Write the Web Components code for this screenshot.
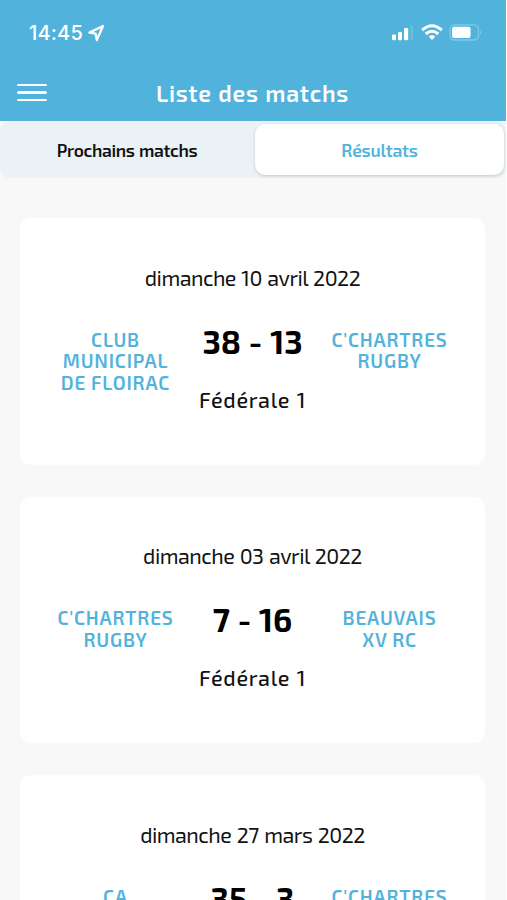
<!DOCTYPE html>
<html lang="fr">
<head>
<meta charset="utf-8">
<meta name="viewport" content="width=device-width, initial-scale=1">
<title>Liste des matchs</title>
<style>
    html {
        background: #fff;
    }
    body {
        margin: 0;
        width: 506px;
        height: 900px;
        overflow: hidden;
        background: #f8f8f8;
        font-family: "Exo 2", Roboto, sans-serif;
        color: #111;
        --blue: #51b3dc;
    }
</style>
</head>
<body>
<match-screen>
    <status-bar slot="top" time="14:45"></status-bar>
    <title-bar slot="top">Liste des matchs</title-bar>
    <tab-bar slot="top">
        <tab-item>Prochains matchs</tab-item>
        <tab-item active>Résultats</tab-item>
    </tab-bar>
    <match-card score="38 - 13" level="Fédérale 1">
        dimanche 10 avril 2022
        <team-name slot="home">CLUB<br>MUNICIPAL<br>DE FLOIRAC</team-name>
        <team-name slot="away">C'CHARTRES<br>RUGBY</team-name>
    </match-card>
    <match-card score="7 - 16" level="Fédérale 1">
        dimanche 03 avril 2022
        <team-name slot="home">C'CHARTRES<br>RUGBY</team-name>
        <team-name slot="away">BEAUVAIS<br>XV RC</team-name>
    </match-card>
    <match-card score="35 - 3" level="Fédérale 1">
        dimanche 27 mars 2022
        <team-name slot="home">CA</team-name>
        <team-name slot="away">C'CHARTRES</team-name>
    </match-card>
</match-screen>

<script>
class MatchScreen extends HTMLElement {
    constructor() {
        super();
        this.attachShadow({ mode: 'open' });
        this.shadowRoot.innerHTML = `
            <style>
                :host { display: block; height: 900px; overflow: hidden; }
                .list {
                    display: flex;
                    flex-direction: column;
                    gap: 32px;
                    padding: 40px 21px 0 20px;
                }
            </style>
            <slot name="top"></slot>
            <div class="list"><slot></slot></div>
        `;
    }
}

class StatusBar extends HTMLElement {
    connectedCallback() {
        this.attachShadow({ mode: 'open' });
        this.shadowRoot.innerHTML = `
            <style>
                :host {
                    display: flex;
                    align-items: center;
                    height: 65px;
                    padding: 0 24px 0 29px;
                    box-sizing: border-box;
                    background: var(--blue);
                    color: #fff;
                }
                .time {
                    font: 500 20px/24px Inter, sans-serif;
                    letter-spacing: 0.2px;
                }
                svg { display: block; }
                .arrow { margin-left: 5px; }
                .icons { display: flex; margin-left: auto; }
            </style>
            <span class="time">${this.getAttribute('time')}</span>
            <svg class="arrow" width="17" height="18" viewBox="0 0 17 18">
                <path d="M15 2 L1.4 8.6 L7.6 9.6 L8.8 16 Z" fill="none" stroke="#fff" stroke-width="2.3" stroke-linejoin="round"/>
            </svg>
            <div class="icons">
                <svg width="92" height="20" viewBox="0 0 92 20">
                    <!-- signal -->
                    <g fill="#fff">
                        <rect x="2" y="11.5" width="4" height="5.7" rx="1.2"/>
                        <rect x="8" y="9" width="4" height="8.2" rx="1.2"/>
                        <rect x="14" y="5" width="4.2" height="12.2" rx="1.2"/>
                        <rect x="20.5" y="2" width="2.6" height="15.2" rx="1.2" opacity=".15"/>
                    </g>
                    <!-- wifi -->
                    <g fill="none" stroke="#fff" stroke-width="3">
                        <path d="M32.2 7 Q42 -1.6 51.8 7"/>
                        <path d="M35.7 11 Q42 5.6 48.3 11"/>
                    </g>
                    <path d="M38.8 13.6 Q42 11 45.2 13.6 L42 17 Z" fill="#fff"/>
                    <!-- battery -->
                    <rect x="60" y="1.8" width="28.5" height="15.2" rx="4.5" fill="none" stroke="#7fcbe9" stroke-width="1.3"/>
                    <rect x="62" y="3.8" width="18.6" height="11.2" rx="2.2" fill="#fff"/>
                    <path d="M90 7 Q92 9.4 90 11.8 Z" fill="#7fcbe9"/>
                </svg>
            </div>
        `;
    }
}

class TitleBar extends HTMLElement {
    constructor() {
        super();
        this.attachShadow({ mode: 'open' });
        this.shadowRoot.innerHTML = `
            <style>
                :host {
                    display: grid;
                    grid-template-columns: 30px 1fr 30px;
                    align-items: center;
                    height: 56px;
                    padding: 0 18px 1px 17px;
                    box-sizing: border-box;
                    background: var(--blue);
                    color: #fff;
                }
                .menu { display: flex; flex-direction: column; gap: 5px; }
                .menu i { height: 2.6px; border-radius: 2px; background: #fff; }
                h1 {
                    margin: 0;
                    text-align: center;
                    font-size: 23px;
                    font-weight: 650;
                    letter-spacing: 0.7px;
                    word-spacing: 1px;
                }
            </style>
            <div class="menu"><i></i><i></i><i></i></div>
            <h1><slot></slot></h1>
        `;
    }
}

class TabBar extends HTMLElement {
    constructor() {
        super();
        this.attachShadow({ mode: 'open' });
        this.shadowRoot.innerHTML = `
            <style>
                :host {
                    display: grid;
                    grid-template-columns: 1fr 1fr;
                    height: 57px;
                    padding: 3px 2px;
                    box-sizing: border-box;
                    border-radius: 9px;
                    background: #eaf2f5;
                }
            </style>
            <slot></slot>
        `;
    }
}

class TabItem extends HTMLElement {
    constructor() {
        super();
        this.attachShadow({ mode: 'open' });
        this.shadowRoot.innerHTML = `
            <style>
                :host {
                    display: flex;
                    align-items: center;
                    justify-content: center;
                    margin-left: 2px;
                    padding: 2px 3px 0 0;
                    border-radius: 10px;
                    font-size: 17.5px;
                    font-weight: 600;
                    letter-spacing: -0.35px;
                    word-spacing: 1px;
                    box-sizing: border-box;
                }
                :host([active]) {
                    padding-right: 0;
                    background: #fff;
                    color: var(--blue);
                    letter-spacing: -0.2px;
                    box-shadow: 0 1px 3px rgba(0, 40, 60, 0.18);
                }
            </style>
            <slot></slot>
        `;
    }
}

class MatchCard extends HTMLElement {
    connectedCallback() {
        this.attachShadow({ mode: 'open' });
        this.shadowRoot.innerHTML = `
            <style>
                :host {
                    display: block;
                    height: 246.5px;
                    padding: 45.5px 30px 0;
                    box-sizing: border-box;
                    border-radius: 11px;
                    background: #fff;
                    text-align: center;
                }
                .date {
                    font-size: 21.5px;
                    line-height: 28px;
                    letter-spacing: -0.53px;
                    word-spacing: 1.2px;
                }
                .row {
                    display: grid;
                    grid-template-columns: 130px 1fr 130px;
                    margin-top: 32px;
                }
                .score {
                    font-size: 32.5px;
                    line-height: 36px;
                    font-weight: 750;
                    letter-spacing: 0;
                    word-spacing: 0.8px;
                    color: #000;
                }
                .level {
                    margin-top: 26px;
                    font-size: 21.5px;
                    line-height: 28px;
                    font-weight: 500;
                    letter-spacing: 0.68px;
                    word-spacing: 1px;
                    white-space: nowrap;
                }
            </style>
            <div class="date"><slot></slot></div>
            <div class="row">
                <slot name="home"></slot>
                <div>
                    <div class="score">${this.getAttribute('score')}</div>
                    <div class="level">${this.getAttribute('level')}</div>
                </div>
                <slot name="away"></slot>
            </div>
        `;
    }
}

class TeamName extends HTMLElement {
    constructor() {
        super();
        this.attachShadow({ mode: 'open' });
        this.shadowRoot.innerHTML = `
            <style>
                :host {
                    display: block;
                    padding-top: 5px;
                    padding-left: 1px;
                    color: var(--blue);
                    font-size: 19px;
                    line-height: 21.5px;
                    font-weight: 600;
                    letter-spacing: 0.8px;
                    white-space: nowrap;
                }
                :host([slot="away"]) {
                    padding-left: 0;
                    padding-right: 1px;
                }
            </style>
            <slot></slot>
        `;
    }
}

customElements.define('match-screen', MatchScreen);
customElements.define('status-bar', StatusBar);
customElements.define('title-bar', TitleBar);
customElements.define('tab-bar', TabBar);
customElements.define('tab-item', TabItem);
customElements.define('match-card', MatchCard);
customElements.define('team-name', TeamName);
</script>
</body>
</html>
